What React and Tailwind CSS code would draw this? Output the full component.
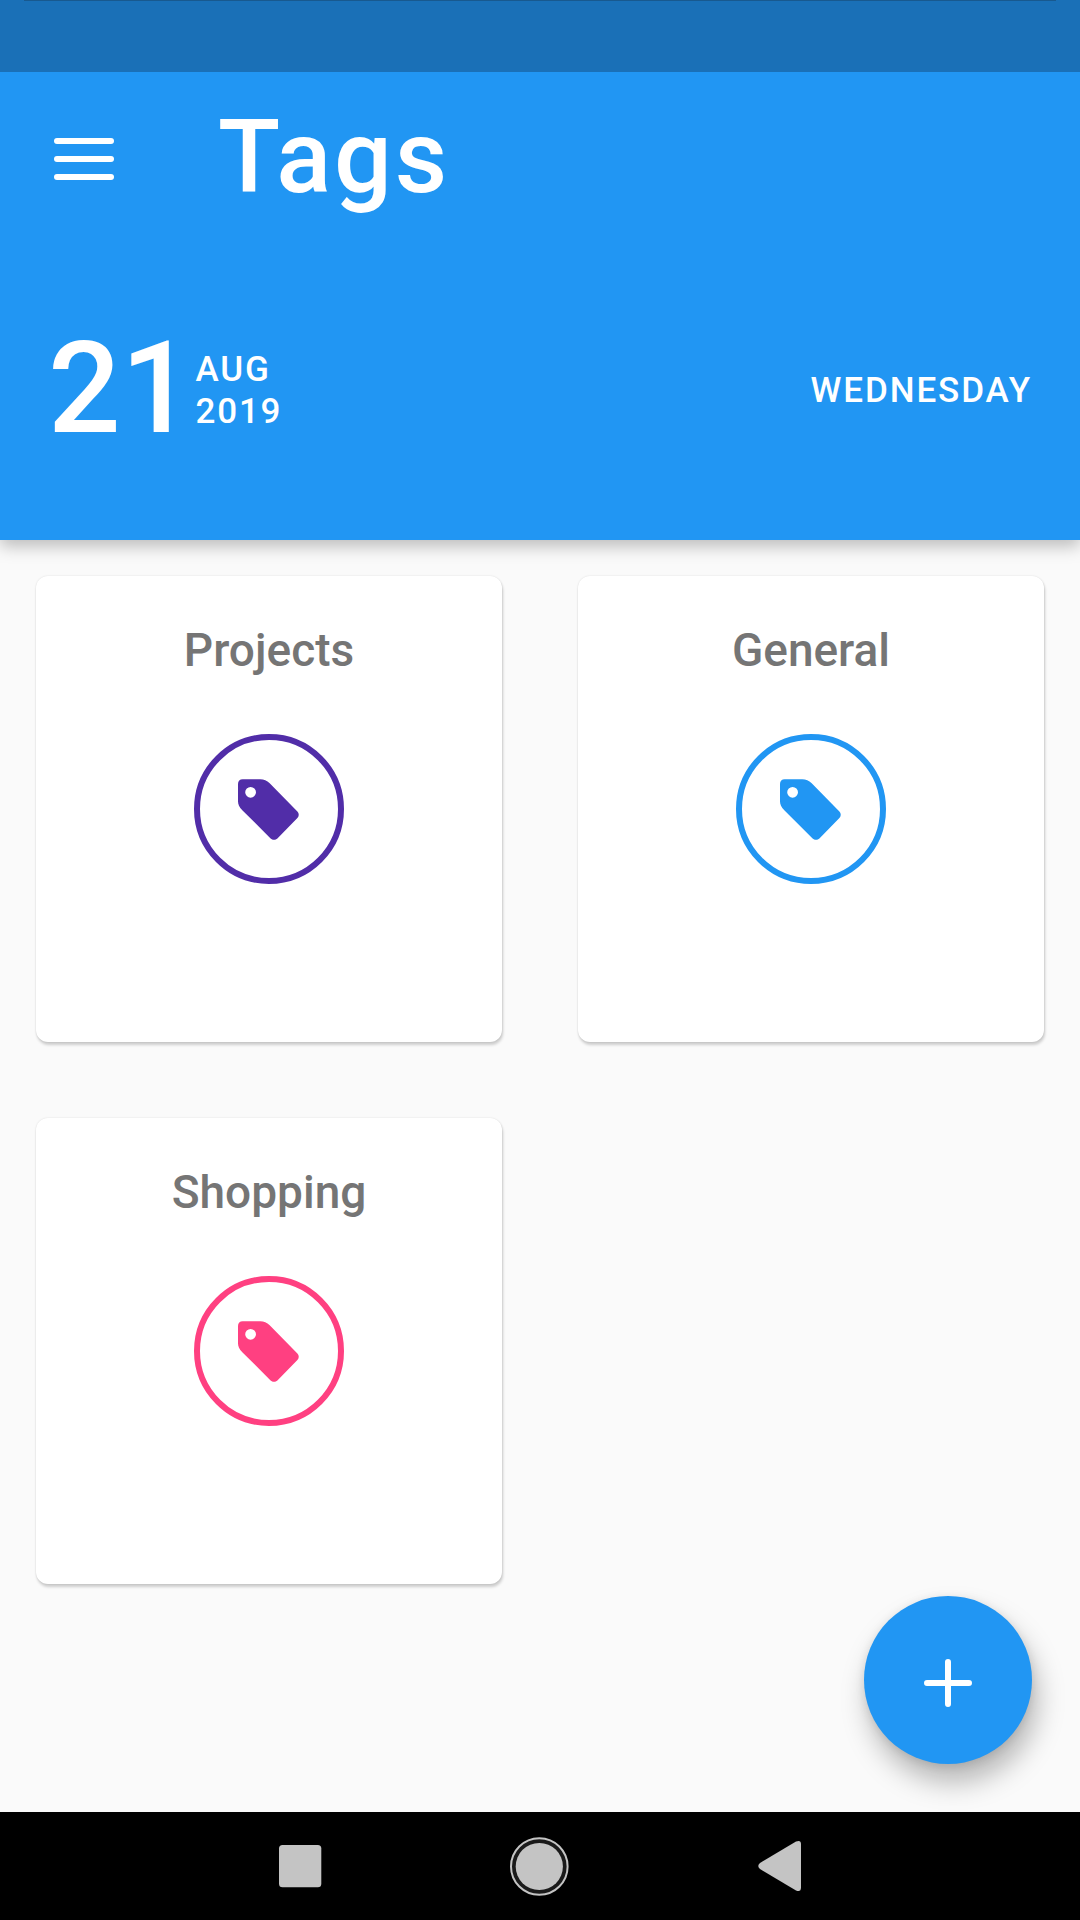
const tags = [
  { name: 'Projects', color: 'text-[#512da8]' },
  { name: 'General', color: 'text-[#2196f3]' },
  { name: 'Shopping', color: 'text-[#ff4081]' },
];

function TagIcon() {
  return (
    <svg className="mr-[2px] h-[61px] w-[61px] shrink-0" viewBox="0 0 61 61" fill="currentColor">
      <path
        fillRule="evenodd"
        d="M4.7 0.3H22.2C26 0.3 28.8 1.4 31.7 4.3L59.4 32.4C61.2 34.3 61.2 37 59.4 38.9L39.4 59.4C37.5 61.2 34.5 61.2 32.6 59.4L4.3 31.2C1.2 28 0 25.5 0 22.2V5C0 2.1 1.8 0.3 4.7 0.3ZM12.6 7.9A5.4 5.4 0 1 0 12.6 18.7A5.4 5.4 0 1 0 12.6 7.9Z"
      />
    </svg>
  );
}

function TagCard({ name, color }) {
  return (
    <div className="flex h-[466px] w-[466px] flex-col items-center rounded-[12px] bg-white pt-[46px] shadow-[1px_3px_3px_rgba(0,0,0,0.18),0_0_2px_rgba(0,0,0,0.12)]">
      <h2 className="text-[46px] leading-[56px] font-medium text-[#757575]">{name}</h2>
      <div className={`mt-[56px] flex h-[150px] w-[150px] items-center justify-center rounded-full border-6 border-current ${color}`}>
        <TagIcon />
      </div>
    </div>
  );
}

function Header() {
  return (
    <header className="relative flex h-[468px] flex-col bg-[#2196f3] text-white shadow-[0_6px_16px_rgba(0,0,0,0.26)]">
      <div className="flex h-[174px] items-center pl-[54px]">
        <button className="flex w-[60px] flex-col gap-3" aria-label="Menu">
          <span className="h-[6px] w-full rounded-[3px] bg-white" />
          <span className="h-[6px] w-full rounded-[3px] bg-white" />
          <span className="h-[6px] w-full rounded-[3px] bg-white" />
        </button>
        <h1 className="mb-[4px] ml-[104px] text-[102px] leading-[120px] font-medium tracking-[2.8px]">Tags</h1>
      </div>
      <div className="mt-[65px] flex h-[160px] items-center justify-between pr-[48px] pl-[48px]">
        <div className="flex items-center">
          <span className="mb-[6px] text-[128px] leading-[150px] font-medium">21</span>
          <div className="ml-[2px] text-[35px] leading-[42px] font-medium tracking-[1.8px]">
            <div>AUG</div>
            <div>2019</div>
          </div>
        </div>
        <span className="text-[35px] leading-[42px] font-medium tracking-[1.9px]">WEDNESDAY</span>
      </div>
    </header>
  );
}

function NavigationBar() {
  return (
    <nav className="flex h-[108px] shrink-0 items-center bg-black">
      <svg className="h-[108px] w-full" viewBox="0 0 1080 108" fill="#c4c4c4">
        <rect x="279" y="33" width="42.3" height="42.3" rx="3.5" />
        <circle cx="539.3" cy="54.5" r="28.3" fill="#1a1a1a" stroke="#c4c4c4" strokeWidth="2" />
        <circle cx="539.3" cy="54.5" r="23.6" />
        <path d="M796 29.5Q801 27.5 801 32V75.5Q801 80.5 796 78.5L760 57Q756.5 54 760 51Z" />
      </svg>
    </nav>
  );
}

export default function App() {
  return (
    <div className="flex h-[1920px] w-[1080px] flex-col overflow-hidden bg-[#fafafa] font-[Roboto,sans-serif]">
      <div className="relative z-10 h-[72px] shrink-0 bg-[#1a70b7]">
        <div className="mx-[24px] h-px bg-[#18598f]" />
      </div>
      <Header />
      <main className="relative min-h-0 flex-1">
        <div className="grid grid-cols-[466px_466px] gap-[76px] pt-[36px] pl-[36px]">
          {tags.map((tag) => (
            <TagCard key={tag.name} {...tag} />
          ))}
        </div>
        <button
          className="absolute right-[48px] bottom-[48px] flex h-[168px] w-[168px] items-center justify-center rounded-full bg-[#2196f3] shadow-[5px_18px_28px_rgba(0,0,0,0.28),0_2px_10px_rgba(0,0,0,0.1)]"
          aria-label="Add tag"
        >
          <svg className="mt-[6px] h-[48px] w-[48px]" viewBox="0 0 48 48" stroke="#fff" strokeWidth="6" strokeLinecap="round">
            <path d="M3 24H45M24 3V45" />
          </svg>
        </button>
      </main>
      <NavigationBar />
    </div>
  );
}
